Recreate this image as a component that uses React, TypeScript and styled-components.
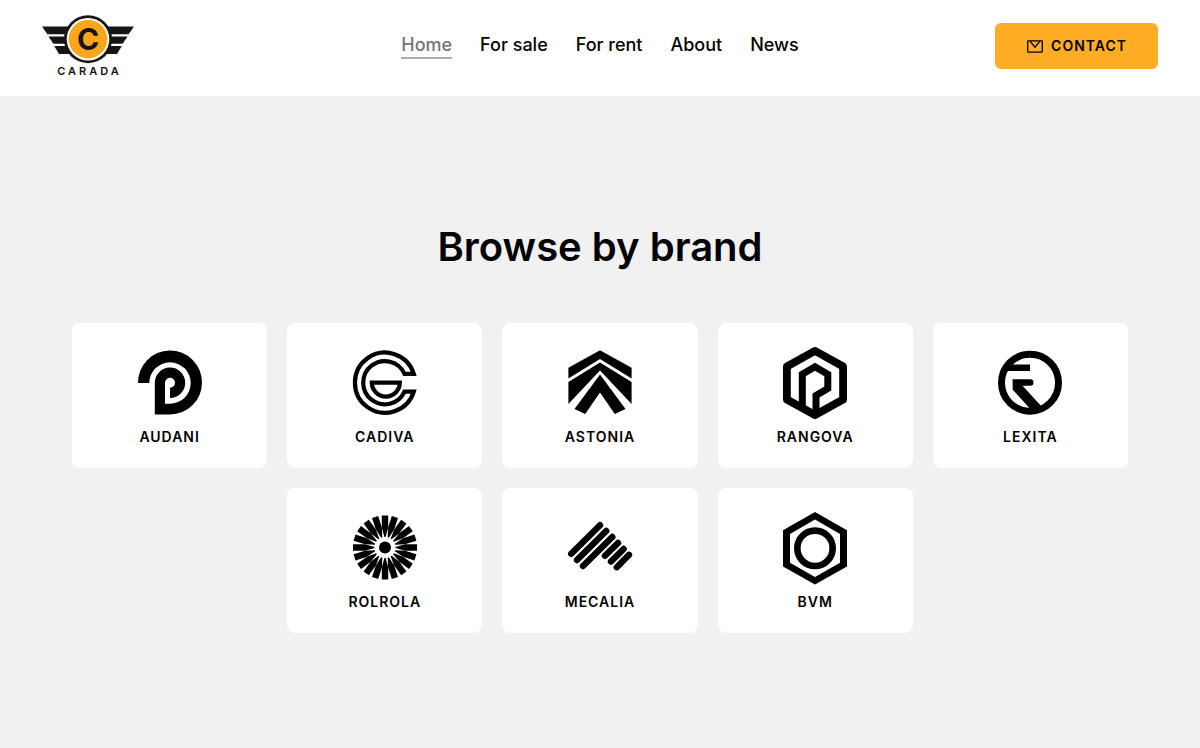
import React from "react";
import styled, { createGlobalStyle } from "styled-components";

const GlobalStyle = createGlobalStyle`
  * { box-sizing: border-box; }
  body {
    margin: 0;
    min-height: 100vh;
    background: #f1f1f1;
    color: #000;
    font-family: Inter, "Liberation Sans", sans-serif;
  }
`;

const Header = styled.header`
  display: grid;
  grid-template-columns: 1fr auto 1fr;
  align-items: center;
  padding: 14px 42px 18px;
  background: #fff;
`;

const LogoLink = styled.a`
  display: flex;
  flex-direction: column;
  align-items: center;
  justify-self: start;
  width: 92px;
  color: #111;
  text-decoration: none;
`;

const LogoName = styled.span`
  padding-left: 3px;
  font-size: 11px;
  font-weight: 600;
  line-height: 14px;
  letter-spacing: 3px;
`;

const Nav = styled.nav`
  display: flex;
  gap: 28px;
`;

const NavLink = styled.a<{ $active?: boolean }>`
  color: ${(p) => (p.$active ? "#757575" : "#000")};
  border-bottom: 2px solid ${(p) => (p.$active ? "#acacac" : "transparent")};
  font-size: 18px;
  font-weight: 500;
  line-height: 24px;
  text-decoration: none;
`;

const ContactButton = styled.button`
  display: flex;
  align-items: center;
  justify-content: center;
  justify-self: end;
  gap: 8px;
  height: 46px;
  padding: 0 31px 0 32px;
  border: 0;
  border-radius: 6px;
  background: #ffad25;
  color: #000;
  font: 600 14px/20px Inter, "Liberation Sans", sans-serif;
  letter-spacing: 1px;
  cursor: pointer;
`;

const Brands = styled.main`
  padding: 125px 72px;
`;

const Title = styled.h2`
  margin: 0 0 50px;
  font-size: 40px;
  font-weight: 600;
  line-height: 52px;
  text-align: center;
`;

const Grid = styled.div`
  display: flex;
  flex-wrap: wrap;
  justify-content: center;
  gap: 20px;
`;

const Card = styled.a`
  display: flex;
  flex: 0 0 calc((100% - 80px) / 5);
  flex-direction: column;
  align-items: center;
  gap: 8px;
  padding: 24px 8px 21px;
  border-radius: 8px;
  background: #fff;
  color: #000;
  text-decoration: none;
`;

const CardName = styled.span`
  font-size: 14px;
  font-weight: 600;
  line-height: 20px;
  letter-spacing: 1px;
`;

const Mark = styled.svg`
  display: block;
  width: 64px;
  height: 72px;
  overflow: visible;
`;

const wing = (
  <g fill="#161616">
    <path d="M0 11.5H28V19.3H5.4Z" />
    <path d="M6.4 21.4H28V28.8H11.4Z" />
    <path d="M12.2 31H28L31 39H17Z" />
  </g>
);

const Emblem = () => (
  <svg width="92" height="50" viewBox="0 -1 92 50" aria-hidden="true">
    {wing}
    <g transform="matrix(-1 0 0 1 92 0)">{wing}</g>
    <circle cx="46" cy="24.2" r="24" fill="#161616" />
    <circle cx="46" cy="24.2" r="21.3" fill="#fff" />
    <circle cx="46" cy="24.2" r="19.3" fill="#ffa61c" />
    <text x="46" y="35" textAnchor="middle" fontFamily="Inter, sans-serif" fontSize="30" fontWeight="700" fill="#161616">
      C
    </text>
  </svg>
);

const Envelope = () => (
  <svg width="16" height="13" viewBox="0 0 16 13" fill="none" stroke="#000" strokeWidth="1.3" aria-hidden="true">
    <rect x="0.7" y="0.9" width="14.6" height="11.2" rx="0.5" />
    <path d="M3 1.2 8 7.2 13 1.2" />
  </svg>
);

const rays = Array.from({ length: 20 }, (_, i) => i * 18);

const brands: { name: string; mark: React.ReactNode }[] = [
  {
    name: "AUDANI",
    mark: (
      <path d="M0 36A32 32 0 1 1 32 67.5H16.8V36A15.2 15.2 0 1 1 32 51V40.8A5 5 0 1 0 27 36V56.7H32A20.7 20.7 0 1 0 11.3 36Z" />
    ),
  },
  {
    name: "CADIVA",
    mark: (
      <g fill="none" stroke="#000" strokeWidth="4.2">
        <path d="M60.8 26.8H51.5A21.6 21.6 0 1 0 51.5 44.6H60.8A30.1 30.1 0 1 1 60.8 26.8Z" />
        <path d="M18.8 35.6H46.8A14 14 0 0 1 18.8 35.6Z" />
      </g>
    ),
  },
  {
    name: "ASTONIA",
    mark: (
      <>
        <path d="M32 3.2 63.6 20.8V31.5L32 12 .4 31.5V20.8Z" />
        <path d="M32 15.5 63.6 35V57L32 23.5 .4 57V35Z" />
        <path d="M32 27.5 57.5 62 46.8 67 32 45.5 17.2 67 6.5 62Z" />
      </>
    ),
  },
  {
    name: "RANGOVA",
    mark: (
      <g fill="none" stroke="#000" strokeLinejoin="round">
        <path strokeWidth="7.8" d="M32 3.9 60.1 19.5V52.5L32 68 3.9 52.5V19.5Z" />
        <path strokeWidth="7" d="M19.3 60V27.2L32 19.8 44.8 27.2V41.5L33 48.5V66" strokeLinejoin="miter" />
      </g>
    ),
  },
  {
    name: "LEXITA",
    mark: (
      <>
        <circle cx="32" cy="35.7" r="28.5" fill="none" stroke="#000" strokeWidth="7" />
        <path d="M7 17.4H32V24H5Z" />
        <path d="M14.6 32.3H32.2A3.2 3.2 0 0 1 32.2 38.8H24.6L44 60 36 66 14.6 42.5Z" />
      </>
    ),
  },
  {
    name: "ROLROLA",
    mark: (
      <>
        <circle cx="32" cy="35.5" r="6" />
        {rays.map((angle) => (
          <path key={angle} transform={`rotate(${angle} 32 35.5)`} d="M28.8 3.5H35.2V15.5L32.6 25H31.4L28.8 15.5Z" />
        ))}
      </>
    ),
  },
  {
    name: "MECALIA",
    mark: (
      <g stroke="#000" strokeWidth="6.4" strokeLinecap="round">
        <path d="M3.2 41.8 32 13.2M9 48 38.2 19M15 54 44.3 25" />
        <path d="M37 43.8 50 31M43 49.6 55.6 37M48.8 55.2 61 42.8" />
      </g>
    ),
  },
  {
    name: "BVM",
    mark: (
      <>
        <path
          fillRule="evenodd"
          d="M32 0 64 18.2V54.4L32 72.6 0 54.4V18.2ZM32 7.6 7 22V50.7L32 65 57 50.7V22Z"
        />
        <circle cx="32" cy="36.3" r="17.7" fill="none" stroke="#000" strokeWidth="6.6" />
      </>
    ),
  },
];

const links = ["Home", "For sale", "For rent", "About", "News"];

export default function App() {
  return (
    <>
      <GlobalStyle />
      <Header>
        <LogoLink href="#">
          <Emblem />
          <LogoName>CARADA</LogoName>
        </LogoLink>
        <Nav>
          {links.map((label, i) => (
            <NavLink key={label} href="#" $active={i === 0}>
              {label}
            </NavLink>
          ))}
        </Nav>
        <ContactButton type="button">
          <Envelope />
          CONTACT
        </ContactButton>
      </Header>
      <Brands>
        <Title>Browse by brand</Title>
        <Grid>
          {brands.map(({ name, mark }) => (
            <Card key={name} href="#">
              <Mark viewBox="0 0 64 72" aria-hidden="true">
                {mark}
              </Mark>
              <CardName>{name}</CardName>
            </Card>
          ))}
        </Grid>
      </Brands>
    </>
  );
}
